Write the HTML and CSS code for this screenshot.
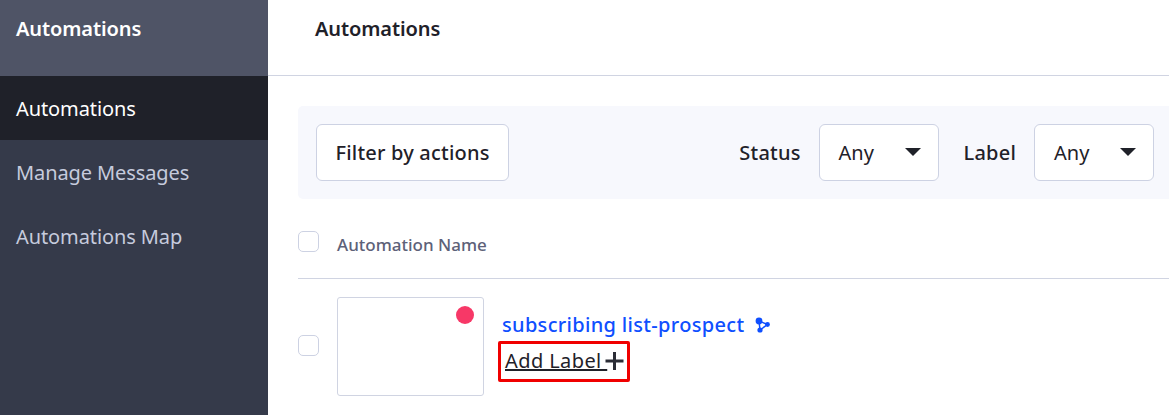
FILE: index.html
```html
<!DOCTYPE html>
<html lang="en">
    <head>
        <meta charset="UTF-8">
        <title>Automations</title>
        <link rel="stylesheet" href="styles.css">
    </head>
    <body>
        <div class="sidebar">
            <div class="sidebar-title">Automations</div>
            <a class="nav-item active">Automations</a>
            <a class="nav-item">Manage Messages</a>
            <a class="nav-item">Automations Map</a>
        </div>
        <div class="main">
            <div class="page-header">Automations</div>
            <div class="content">
                <div class="filter-bar">
                    <button class="filter-btn">Filter by actions</button>
                    <div class="filters">
                        <span class="filter-label">Status</span>
                        <div class="select"><span>Any</span><i class="caret"></i></div>
                        <span class="filter-label">Label</span>
                        <div class="select"><span>Any</span><i class="caret"></i></div>
                    </div>
                </div>
                <div class="table-head">
                    <span class="checkbox"></span>
                    <span class="col-name">Automation Name</span>
                </div>
                <div class="row">
                    <span class="checkbox row-check"></span>
                    <div class="thumb"><i class="status-dot"></i></div>
                    <div class="row-info">
                        <div class="row-title">
                            <a>subscribing list-prospect</a>
                            <svg class="flow-icon" width="16" height="16" viewBox="0 0 16 16">
                                <path d="M4 4 L12.5 7.5 L5 13 Z" fill="none" stroke="#0f4fff" stroke-width="1.5"/>
                                <circle cx="4" cy="4" r="3.4" fill="#0f4fff"/>
                                <circle cx="12.5" cy="7.5" r="2.4" fill="#0f4fff"/>
                                <circle cx="5" cy="13" r="2.6" fill="#0f4fff"/>
                            </svg>
                        </div>
                        <div class="add-label">
                            <span class="add-label-text">Add Label </span>
                            <svg class="plus-icon" width="19" height="18" viewBox="0 0 19 18">
                                <path d="M9.5 0V18M0.5 9H18.5" stroke="#2b2d36" stroke-width="3"/>
                            </svg>
                        </div>
                    </div>
                </div>
            </div>
        </div>
    </body>
</html>
```
FILE: styles.css
```css
* {
    margin: 0;
    padding: 0;
    box-sizing: border-box;
    font-family: 'Noto Sans', 'Liberation Sans', sans-serif;
}

html, body {
    height: 100%;
    overflow: hidden;
}

body {
    display: flex;
    background: white;
    color: #1f2129;
}

.sidebar {
    width: 268px;
    flex-shrink: 0;
    background: #353a4a;
}

.sidebar-title {
    height: 76px;
    padding: 17px 16px 0;
    background: #4f5466;
    color: white;
    font-size: 20px;
    font-weight: 600;
    line-height: 24px;
    letter-spacing: -0.1px;
}

.nav-item {
    display: block;
    height: 64px;
    padding: 0 16px;
    color: #c6cbdd;
    font-size: 20px;
    line-height: 65px;
    letter-spacing: -0.1px;
}

.nav-item.active {
    background: #1f2129;
    color: white;
}

.main {
    flex: 1;
    min-width: 0;
}

.page-header {
    height: 76px;
    padding: 17px 47px 0;
    border-bottom: 1px solid #d0d4e2;
    font-size: 20px;
    font-weight: 600;
    line-height: 24px;
    letter-spacing: -0.1px;
}

.content {
    padding: 30px 0 0 30px;
}

.filter-bar {
    display: flex;
    align-items: center;
    justify-content: space-between;
    height: 93px;
    padding: 0 15px 0 18px;
    background: #f7f8fd;
    border-radius: 5px 0 0 5px;
}

.filter-btn {
    width: 193px;
    height: 57px;
    background: white;
    border: 1px solid #cdd2e3;
    border-radius: 6px;
    color: #1f2129;
    font-size: 20px;
    font-weight: 500;
    letter-spacing: 0.2px;
}

.filters {
    display: flex;
    align-items: center;
}

.filter-label {
    margin-right: 18px;
    font-size: 20px;
    font-weight: 500;
    letter-spacing: 0.2px;
}

.select {
    display: flex;
    align-items: center;
    justify-content: space-between;
    width: 120px;
    height: 57px;
    margin-right: 25px;
    padding: 0 17px 0 19px;
    background: white;
    border: 1px solid #cdd2e3;
    border-radius: 6px;
    font-size: 20px;
}

.select:last-child {
    margin-right: 0;
}

.caret {
    width: 0;
    height: 0;
    margin-top: -2px;
    border-left: 8px solid transparent;
    border-right: 8px solid transparent;
    border-top: 8px solid #1f2129;
}

.checkbox {
    width: 21px;
    height: 21px;
    flex-shrink: 0;
    background: white;
    border: 1px solid #cdd2e3;
    border-radius: 5px;
}

.row-check {
    margin-bottom: 2px;
}

.table-head {
    display: flex;
    align-items: flex-start;
    height: 80px;
    padding-top: 32px;
    border-bottom: 1px solid #d0d4e2;
}

.col-name {
    margin: 2px 0 0 18px;
    color: #5d6178;
    font-size: 17px;
    font-weight: 500;
    line-height: 24px;
}

.row {
    display: flex;
    align-items: center;
    padding-top: 18px;
}

.thumb {
    position: relative;
    width: 147px;
    height: 99px;
    margin-left: 18px;
    border: 1px solid #d0d4e2;
    border-radius: 3px;
}

.status-dot {
    position: absolute;
    top: 8px;
    right: 9px;
    width: 18px;
    height: 18px;
    background: #f73867;
    border-radius: 50%;
}

.row-info {
    margin-left: 14px;
}

.row-title {
    display: flex;
    align-items: center;
    padding-left: 4px;
    color: #0f4fff;
    font-size: 20px;
    font-weight: 500;
    line-height: 28px;
    letter-spacing: 0.32px;
}

.flow-icon {
    margin-left: 11px;
}

.add-label {
    display: flex;
    align-items: center;
    width: 132px;
    height: 41px;
    margin-top: 2px;
    padding: 0 0 2px 4px;
    border: 3px solid #f00000;
    border-radius: 2px;
    font-size: 20px;
    letter-spacing: 0.4px;
}

.add-label-text {
    white-space: pre;
    text-decoration: underline;
}

.plus-icon {
    margin-left: -2px;
}
```
